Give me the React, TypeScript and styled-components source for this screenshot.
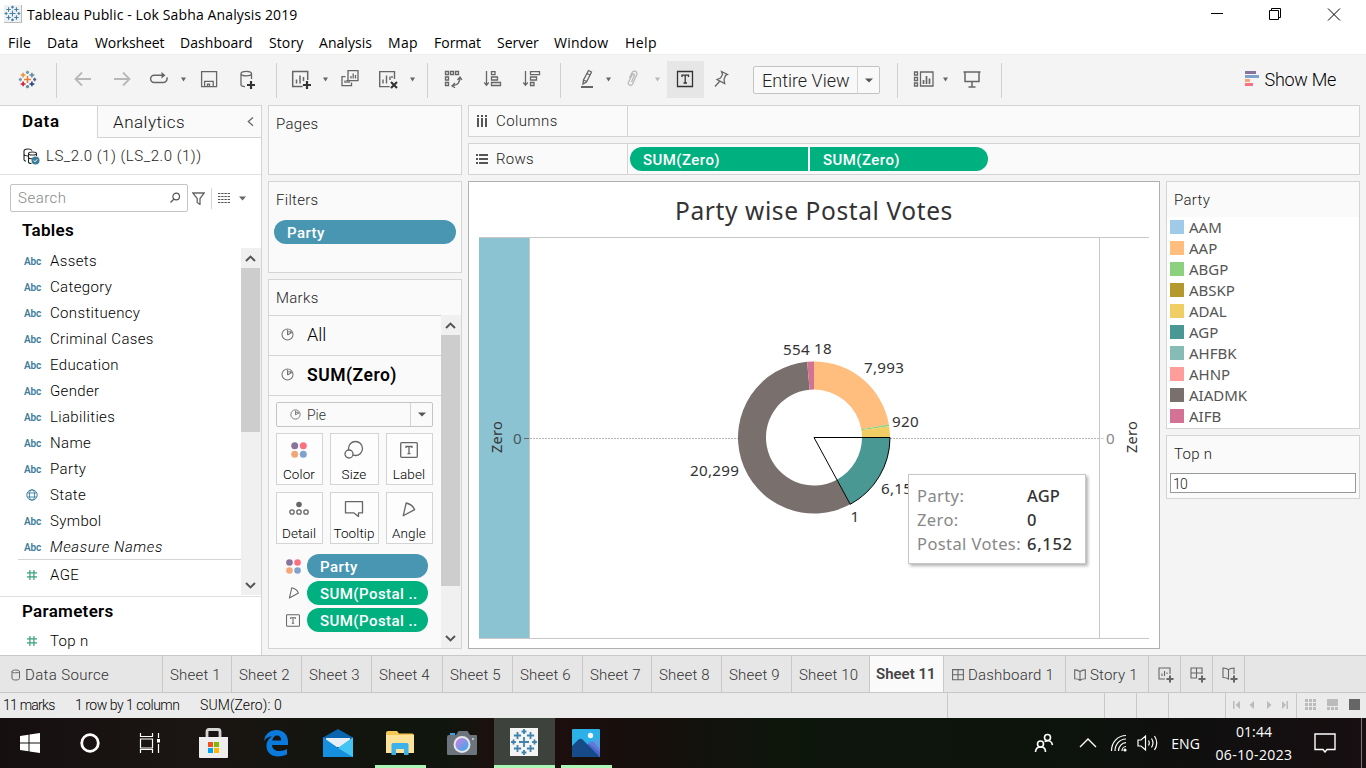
import React from 'react';
import styled, { createGlobalStyle, css } from 'styled-components';

const Global = createGlobalStyle`
  * { box-sizing: border-box; }
  html, body { margin: 0; padding: 0; }
  body { width: 1366px; height: 768px; overflow: hidden; background: #f4f4f4; }
  svg { display: block; flex: none; }
`;

const uiFont = `Roboto, "Liberation Sans", sans-serif`;
const vizFont = `"Noto Sans", "Open Sans", sans-serif`;
const sysFont = `"Open Sans", "Noto Sans", sans-serif`;
const line = '#d4d4d4';
const blue = '#4996b2';
const green = '#00b180';

/* ---------- primitives ---------- */

const Text = styled.span<{ $size?: number; $ls?: number; $w?: number; $c?: string; $ml?: number }>`
  display: block;
  white-space: pre;
  font-size: ${p => p.$size ?? 15}px;
  letter-spacing: ${p => p.$ls ?? 0}px;
  font-weight: ${p => p.$w ?? 'inherit'};
  color: ${p => p.$c ?? 'inherit'};
  margin-left: ${p => p.$ml ?? 0}px;
`;

const Screen = styled.div`
  width: 1366px;
  height: 768px;
  display: flex;
  flex-direction: column;
  font-family: ${uiFont};
  font-weight: 300;
  color: #000;
`;

/* ---------- title and menu ---------- */

const TitleBar = styled.header`
  height: 30px;
  background: #fff;
  display: flex;
  align-items: center;
  padding: 0 25px 1px 4px;
  font-family: ${sysFont};
  font-weight: 400;
  color: #000;
`;
const AppIcon = styled.div`
  width: 18px;
  height: 18px;
  background: #f0f0f0;
  border-right: 1px solid #bbb;
  border-bottom: 1px solid #bbb;
  margin-top: -1px;
`;
const WindowButtons = styled.div`
  margin: -1px 0 0 auto;
  display: flex;
  align-items: center;
  gap: 45px;
`;
const MenuBar = styled.nav`
  height: 24px;
  background: #fff;
  display: flex;
  align-items: center;
  padding: 1px 0 0 8px;
  font-family: ${sysFont};
  font-weight: 400;
  color: #000;
`;
const MenuItem = styled.span<{ $width: number; $ls: number }>`
  width: ${p => p.$width}px;
  font-size: 14px;
  letter-spacing: ${p => p.$ls}px;
  white-space: nowrap;
  line-height: 23px;
`;

/* ---------- toolbar ---------- */

const Toolbar = styled.div`
  height: 51px;
  padding-bottom: 2px;
  background: #f4f4f4;
  border-top: 1px solid #eee;
  display: flex;
  align-items: center;
`;
const Tool = styled.div<{ $ml: number; $dim?: boolean }>`
  margin-left: ${p => p.$ml}px;
  color: ${p => (p.$dim ? '#b8b8b8' : '#666')};
`;
const Separator = styled.div<{ $ml: number }>`
  width: 1px;
  height: 35px;
  background: #d0d0d0;
  margin-left: ${p => p.$ml}px;
  margin-top: 3px;
`;
const ActiveTool = styled.div`
  width: 37px;
  height: 37px;
  margin-left: 7px;
  padding-right: 2px;
  background: #e6e6e6;
  display: flex;
  align-items: center;
  justify-content: center;
  color: #333;
`;
const Select = styled.div`
  width: 127px;
  height: 28px;
  margin: 2px 0 0 22px;
  border: 1px solid #c4c4c4;
  border-radius: 2px;
  background: #f9f9f9;
  display: flex;
  align-items: center;
  color: #222;
`;
const SelectArrow = styled.div<{ $width: number }>`
  width: ${p => p.$width}px;
  height: 100%;
  margin-left: auto;
  border-left: 1px solid ${line};
  display: flex;
  align-items: center;
  justify-content: center;
  color: #555;
`;
const ShowMe = styled.div`
  margin: 0 30px 0 auto;
  display: flex;
  align-items: center;
  color: #000;
`;

/* ---------- workspace ---------- */

const Workspace = styled.main`
  height: 550px;
  display: flex;
`;
const DataPane = styled.aside`
  width: 262px;
  height: 550px;
  background: #fff;
  border-right: 1px solid ${line};
  border-top: 1px solid ${line};
  display: flex;
  flex-direction: column;
`;
const PaneTabs = styled.div`
  height: 32px;
  display: flex;
`;
const PaneTab = styled.div<{ $active?: boolean }>`
  display: flex;
  align-items: center;
  ${p =>
    p.$active
      ? css`width: 97px; padding: 0 0 2px 22px;`
      : css`
          flex: 1;
          padding: 0 7px 0 15px;
          background: #fafafa;
          border-left: 1px solid ${line};
          border-bottom: 1px solid ${line};
          justify-content: space-between;
        `}
`;
const SourceRow = styled.div`
  height: 37px;
  display: flex;
  align-items: center;
  padding-left: 23px;
  border-bottom: 1px solid #e0e0e0;
  color: #222;
`;
const SearchRow = styled.div`
  height: 28px;
  margin-top: 9px;
  padding-left: 10px;
  display: flex;
  align-items: center;
  color: #555;
`;
const SearchBox = styled.div`
  width: 178px;
  height: 28px;
  border: 1px solid #c4c4c4;
  border-radius: 2px;
  display: flex;
  align-items: center;
  justify-content: space-between;
  padding: 0 6px 0 7px;
  color: #888;
`;
const Rule = styled.div<{ $h: number; $ml: number }>`
  width: 1px;
  height: ${p => p.$h}px;
  margin-left: ${p => p.$ml}px;
  background: ${line};
`;
const SectionTitle = styled.h2<{ $h: number; $gap?: number }>`
  margin: 0 0 ${p => p.$gap ?? 0}px;
  height: ${p => p.$h}px;
  line-height: ${p => p.$h}px;
  padding-left: 22px;
  font-size: 17px;
  font-weight: 600;
  letter-spacing: 0.3px;
  color: #000;
`;
const FieldArea = styled.div`
  height: 349px;
  display: flex;
  border-bottom: 1px solid #e0e0e0;
`;
const FieldList = styled.div`
  flex: 1;
`;
const Field = styled.div<{ $italic?: boolean }>`
  height: 26px;
  display: flex;
  align-items: center;
  font-size: 15px;
  letter-spacing: ${p => (p.$italic ? 0.6 : 0.35)}px;
  font-style: ${p => (p.$italic ? 'italic' : 'normal')};
`;
const FieldType = styled.div<{ $indent?: number }>`
  width: ${p => 26 - (p.$indent ?? 0)}px;
  margin-left: ${p => 24 + (p.$indent ?? 0)}px;
  font-size: 10px;
  font-weight: 600;
  font-style: normal;
  letter-spacing: -0.1px;
  color: #3b7d9b;
`;
const FieldDivider = styled.div`
  height: 1px;
  margin: -1px 0 2px 18px;
  background: ${line};
`;
const ScrollTrack = styled.div<{ $h: number }>`
  width: 20px;
  height: ${p => p.$h}px;
  background: #f0f0f0;
  display: flex;
  flex-direction: column;
  color: #555;
`;
const ScrollButton = styled.div<{ $bottom?: boolean }>`
  width: 19px;
  height: 20px;
  margin-top: ${p => (p.$bottom ? 'auto' : 0)};
  display: flex;
  align-items: center;
  justify-content: center;
`;
const ScrollThumb = styled.div<{ $h: number }>`
  width: 19px;
  height: ${p => p.$h}px;
  background: #cdcdcd;
`;

/* ---------- shelves and cards ---------- */

const CardColumn = styled.section`
  width: 194px;
  margin-left: 6px;
  display: flex;
  flex-direction: column;
  gap: 6px;
`;
const Card = styled.div<{ $h: number }>`
  height: ${p => p.$h}px;
  border: 1px solid ${line};
  background: #fafafa;
`;
const CardTitle = styled.div`
  height: 35px;
  line-height: 37px;
  padding-left: 7px;
  font-size: 15px;
  letter-spacing: 0.3px;
  color: #222;
`;
const Pill = styled.div<{ $color: string; $width: number; $left?: boolean; $right?: boolean }>`
  width: ${p => p.$width}px;
  height: 24px;
  padding-left: 13px;
  line-height: 26px;
  border-radius: ${p => (p.$left ? '12px 0 0 12px' : p.$right ? '0 12px 12px 0' : '12px')};
  background: ${p => p.$color};
  color: #fff;
  font-size: 15px;
  font-weight: 500;
  letter-spacing: 0.45px;
  white-space: nowrap;
`;
const FilterPills = styled.div`
  padding: 3px 0 0 5px;
`;
const MarksBody = styled.div`
  height: 333px;
  display: flex;
`;
const MarksList = styled.div`
  width: 172px;
`;
const MarksRow = styled.div`
  height: 40px;
  border-top: 1px solid ${line};
  display: flex;
  align-items: center;
  padding: 0 0 2px 12px;
  color: #000;
`;
const MarksTools = styled.div`
  border-top: 1px solid ${line};
  padding: 6px 7px 0;
  height: 253px;
`;
const MarkType = styled.div`
  width: 157px;
  height: 25px;
  border: 1px solid #c4c4c4;
  border-radius: 2px;
  display: flex;
  align-items: center;
  padding-left: 13px;
  color: #666;
`;
const MarkGrid = styled.div`
  width: 157px;
  margin-top: 6px;
  display: grid;
  grid-template-columns: 47px 49px 47px;
  grid-auto-rows: 52px;
  gap: 7px;
`;
const MarkButton = styled.div`
  border: 1px solid ${line};
  background: #fdfdfd;
  display: flex;
  flex-direction: column;
  align-items: center;
  color: #666;
  padding: 6px 1px 0 0;
`;
const MarkLabel = styled.span`
  margin-top: 6px;
  font-size: 13.5px;
  line-height: 16px;
  letter-spacing: 0.1px;
  color: #000;
  white-space: nowrap;
`;
const MarkPills = styled.div`
  margin: 10px 0 0 10px;
  display: flex;
  flex-direction: column;
  gap: 3px;
`;
const PillRow = styled.div`
  display: flex;
  align-items: center;
  color: #666;
`;
const PillIcon = styled.div`
  width: 21px;
`;

const Main = styled.section`
  width: 892px;
  margin-left: 6px;
  display: flex;
  flex-direction: column;
  gap: 6px;
`;
const Shelf = styled.div`
  height: 32px;
  border: 1px solid ${line};
  background: #fafafa;
  display: flex;
  align-items: center;
`;
const ShelfLabel = styled.div`
  width: 159px;
  height: 100%;
  border-right: 1px solid ${line};
  padding: 0 0 0 7px;
  display: flex;
  align-items: center;
  line-height: 20px;
  color: #222;
`;
const ShelfPills = styled.div`
  display: flex;
  gap: 2px;
  padding-left: 2px;
`;
const ViewRow = styled.div`
  display: flex;
  gap: 6px;
`;
const Sheet = styled.div`
  position: relative;
  width: 692px;
  height: 468px;
  border: 1px solid #b0b0b0;
  background: #fff;
  font-family: ${vizFont};
  font-weight: 400;
`;
const SheetTitle = styled.h1`
  margin: 0;
  height: 55px;
  line-height: 58px;
  text-align: center;
  font-size: 24.5px;
  font-weight: 400;
  letter-spacing: 0.6px;
  color: #333;
`;
const Chart = styled.svg`
  font-family: ${vizFont};
`;
const Tooltip = styled.div`
  position: absolute;
  left: 439px;
  top: 292px;
  width: 178px;
  height: 90px;
  border: 1px solid #c8c8c8;
  background: #fff;
  box-shadow: 2px 2px 3px rgba(0, 0, 0, 0.3);
  padding: 9px 0 0 8px;
  display: grid;
  grid-template-columns: 110px 1fr;
  grid-auto-rows: 24px;
  align-content: start;
  line-height: 24px;
  white-space: nowrap;
`;
const Side = styled.aside`
  width: 194px;
  display: flex;
  flex-direction: column;
  gap: 6px;
`;
const Legend = styled.div`
  height: 211px;
  background: #fff;
  padding-left: 3px;
`;
const LegendItem = styled.div`
  height: 21px;
  display: flex;
  align-items: center;
  gap: 5px;
  color: #555;
  font-family: ${vizFont};
  font-weight: 400;
  line-height: 18px;
  padding-bottom: 1px;
`;
const Swatch = styled.span<{ $color: string }>`
  width: 14px;
  height: 14px;
  background: ${p => p.$color};
`;
const ParameterInput = styled.div`
  height: 20px;
  width: 186px;
  margin: 2px 0 0 3px;
  border: 1px solid #999;
  background: #fff;
  padding-left: 2px;
  line-height: 20px;
  font-size: 14px;
  letter-spacing: -0.7px;
  color: #222;
`;

/* ---------- bottom bars ---------- */

const TabStrip = styled.div`
  height: 38px;
  background: #e6e6e6;
  border-top: 1px solid #c8c8c8;
  border-bottom: 1px solid #c8c8c8;
  display: flex;
`;
const SheetTab = styled.div<{ $width: number; $pad?: number; $active?: boolean }>`
  width: ${p => p.$width}px;
  padding: 1px 0 0 ${p => p.$pad ?? 7}px;
  border-right: 1px solid #c8c8c8;
  display: flex;
  align-items: center;
  gap: 4px;
  font-size: 15px;
  letter-spacing: 0.2px;
  color: #333;
  white-space: nowrap;
  ${p =>
    p.$active &&
    css`
      padding: 0 0 1px 6px;
      background: #fafafa;
      color: #444;
      font-weight: 600;
      letter-spacing: 0;
    `}
`;
const StatusBar = styled.div`
  height: 25px;
  background: #ebebeb;
  display: flex;
  align-items: center;
  padding-left: 3px;
  color: #000;
`;
const StatusItem = styled.span<{ $width: number; $ls: number }>`
  width: ${p => p.$width}px;
  font-size: 14px;
  letter-spacing: ${p => p.$ls}px;
  line-height: 23px;
  white-space: nowrap;
`;
const StatusCell = styled.div<{ $width: number; $shift?: boolean }>`
  width: ${p => p.$width}px;
  height: 100%;
  border-left: 1px solid #c8c8c8;
  padding: 0 0 2px ${p => (p.$shift ? 3 : 0)}px;
  display: flex;
  align-items: center;
  justify-content: center;
`;

const Taskbar = styled.footer`
  height: 50px;
  background: linear-gradient(90deg, #150f10 0%, #1b1513 14%, #11150d 28%, #10160d 33%, #200e0e 37%, #160f0d 47%, #0d160b 58%, #0c140c 75%, #100f0f 88%, #170f11 100%);
  display: flex;
  color: #fff;
  font-family: ${sysFont};
  font-weight: 400;
`;
const TaskSlot = styled.div<{ $ml?: number; $width: number; $active?: boolean; $running?: boolean }>`
  width: ${p => p.$width}px;
  height: 50px;
  margin-left: ${p => p.$ml ?? 0}px;
  padding: 0 ${p => (p.$running ? 2 : 0)}px 0 0;
  display: flex;
  align-items: center;
  justify-content: center;
  background: ${p => (p.$active ? '#3e423c' : 'transparent')};
  border: solid transparent;
  border-width: 3px 0;
  border-bottom-color: ${p => (p.$running ? '#adf7b6' : 'transparent')};
`;
const Tray = styled.div`
  margin-left: auto;
  display: flex;
  align-items: center;
`;
const TrayIcon = styled.div<{ $ml?: number }>`
  margin-left: ${p => p.$ml ?? 0}px;
`;
const Clock = styled.div`
  width: 78px;
  margin-left: 15px;
  text-align: center;
  font-size: 14px;
  line-height: 23px;
  white-space: nowrap;
`;
const DesktopEdge = styled.div`
  width: 5px;
  height: 50px;
  margin-left: 25px;
  border-left: 1px solid #777;
`;

/* ---------- icons ---------- */

const Icon = ({ size = 20, w, h, children }: { size?: number; w?: number; h?: number; children: React.ReactNode }) => (
  <svg width={w ?? size} height={h ?? size} viewBox={`0 0 ${w ?? size} ${h ?? size}`} fill="none" stroke="currentColor" strokeWidth="1.3">
    {children}
  </svg>
);

const Caret = ({ w = 6 }: { w?: number }) => (
  <svg width={w} height="5" viewBox="0 0 6 5" preserveAspectRatio="none" fill="currentColor"><path d="M0 .5h6L3 4.5z" /></svg>
);

const plus = (x: number, y: number, r: number) => `M${x - r} ${y}h${r * 2}M${x} ${y - r}v${r * 2}`;

const TableauMark = ({ size, colored }: { size: number; colored?: boolean }) => {
  const c = colored
    ? ['#eb7a2e', '#e8933d', '#5c8aa8', '#c72035', '#1f457e', '#7199a6', '#5b6591', '#5b879b', '#7199a6']
    : Array(9).fill('#3f83ad');
  return (
    <svg width={size} height={size} viewBox="0 0 28 28" fill="none" strokeWidth={colored ? 2.3 : 1.8}>
      <path d={plus(14, 14, 5)} stroke={c[0]} />
      <path d={plus(7.5, 7.5, 3.6)} stroke={c[1]} />
      <path d={plus(20.5, 7.5, 3.6)} stroke={c[2]} />
      <path d={plus(7.5, 20.5, 3.6)} stroke={c[3]} />
      <path d={plus(20.5, 20.5, 3.6)} stroke={c[4]} />
      <path d={plus(14, 3.5, 2.4)} stroke={c[5]} />
      <path d={plus(24.5, 14, 2.4)} stroke={c[6]} />
      <path d={plus(14, 24.5, 2.4)} stroke={c[7]} />
      <path d={plus(3.5, 14, 2.4)} stroke={c[8]} />
    </svg>
  );
};

const PieIcon = ({ size = 13 }: { size?: number }) => (
  <svg width={size} height={size} viewBox="0 0 13 13" fill="none" stroke="#777" strokeWidth="1.1">
    <circle cx="6.5" cy="6.5" r="5.5" /><path d="M6.5 7V1.8M6.5 7L11 4.2M6.5 3.8h3v2" />
  </svg>
);
const ColorDots = ({ size }: { size: number }) => (
  <svg width={size} height={size} viewBox="0 0 16 16">
    <circle cx="3.7" cy="3.7" r="3.5" fill="#87739b" /><circle cx="12.3" cy="3.7" r="3.5" fill="#fb7081" />
    <circle cx="3.7" cy="12.3" r="3.5" fill="#f3a778" /><circle cx="12.3" cy="12.3" r="3.5" fill="#7ea2cc" />
  </svg>
);
const AngleIcon = ({ w = 14, h = 15 }: { w?: number; h?: number }) => (
  <svg width={w} height={h} viewBox="0 0 14 15" fill="none" stroke="currentColor" strokeWidth="1.3" strokeLinejoin="round">
    <path d="M4.2 1Q10.5 2.5 12.6 7.6L1.2 13.8z" />
  </svg>
);
const LabelIcon = ({ w, h }: { w: number; h: number }) => (
  <svg width={w} height={h} viewBox="0 0 18 16" fill="none" stroke="currentColor" strokeWidth="1.3">
    <rect x=".7" y=".7" width="16.6" height="14.6" rx="1" /><path d="M6 6V4.5h6V6M9 4.5v7M7.5 11.6h3" />
  </svg>
);
const Hash = () => (
  <svg width="12" height="12" viewBox="0 0 12 12" fill="none" stroke="#35a27a" strokeWidth="1.2">
    <path d="M3.9 1v10M7.9 1v10M1 3.9h10M1 7.9h10" />
  </svg>
);
const Globe = () => (
  <svg width="12" height="12" viewBox="0 0 12 12" fill="none" stroke="#4a86a4" strokeWidth="1">
    <circle cx="6" cy="6" r="5.2" /><ellipse cx="6" cy="6" rx="2.6" ry="5.2" /><path d="M1.4 4h9.2M1.4 8h9.2" />
  </svg>
);
const Chevron = ({ down }: { down?: boolean }) => (
  <svg width="11" height="7" viewBox="0 0 11 7" fill="none" stroke="#555" strokeWidth="2"><path d={down ? 'M1 1l4.5 4.4L10 1' : 'M1 6l4.5-4.4L10 6'} /></svg>
);
const DashboardIcon = () => (
  <svg width="12" height="12" viewBox="0 0 12 12" fill="none" stroke="#666" strokeWidth="1.1"><path d="M.6.6h10.8v10.2H.6zM6 .6v10.2M.6 5.7h10.8" /></svg>
);
const StoryIcon = () => (
  <svg width="12" height="12" viewBox="0 0 12 12" fill="none" stroke="#666" strokeWidth="1.1">
    <path d="M6 2.6C4.5 1.2 2.6.9.7.9v8.9c2 0 3.8.3 5.3 1.6 1.5-1.3 3.3-1.6 5.3-1.6V.9C9.4.9 7.5 1.2 6 2.6zv8.7" />
  </svg>
);

/* ---------- data ---------- */

const menus: [string, number, number][] = [
  ['File', 39, 0.2], ['Data', 48, 0.2], ['Worksheet', 85, -0.1], ['Dashboard', 89, 0.05], ['Story', 50, 0.1], ['Analysis', 69, 0.05],
  ['Map', 46, 0.3], ['Format', 63, 0], ['Server', 57, 0], ['Window', 71, 0.25], ['Help', 50, 0.4],
];
const fields = ['Assets', 'Category', 'Constituency', 'Criminal Cases', 'Education', 'Gender', 'Liabilities', 'Name', 'Party', 'State', 'Symbol', 'Measure Names'];
const legend: [string, string][] = [
  ['AAM', '#a0cbe8'], ['AAP', '#ffbe7d'], ['ABGP', '#8cd17d'], ['ABSKP', '#b6992d'], ['ADAL', '#f1ce63'],
  ['AGP', '#499894'], ['AHFBK', '#86bcb6'], ['AHNP', '#ff9d9a'], ['AIADMK', '#79706e'], ['AIFB', '#d37295'],
];
const tabs: [string, number][] = [
  ['Sheet 1', 69], ['Sheet 2', 70], ['Sheet 3', 70], ['Sheet 4', 71], ['Sheet 5', 70], ['Sheet 6', 70], ['Sheet 7', 69],
  ['Sheet 8', 70], ['Sheet 9', 70], ['Sheet 10', 78],
];
const slices: [number, number, string][] = [
  [0, 80.2, '#ffbe7d'], [80.2, 81.4, '#8cd17d'], [81.4, 90, '#f1ce63'], [90, 151.5, '#499894'], [151.5, 354.8, '#79706e'], [354.8, 360, '#d37295'],
];
const labels: [string, number, number][] = [
  ['554', 783, 355], ['18', 814, 354], ['7,993', 864, 372.5], ['920', 892, 426.5], ['6,152', 881, 493.5], ['1', 850.5, 521.5], ['20,299', 690, 475.5],
];

/* Screen position of the drawing's origin, and the donut's centre in drawing units. */
const OX = 469;
const OY = 237;
const CX = 814 - OX;
const CY = 437.5 - OY;
const at = (deg: number, r: number) => {
  const a = ((deg - 90) * Math.PI) / 180;
  return `${(CX + r * Math.cos(a)).toFixed(2)} ${(CY + r * Math.sin(a)).toFixed(2)}`;
};
const ring = (a: number, b: number) => {
  const big = b - a > 180 ? 1 : 0;
  return `M${at(a, 76)}A76 76 0 ${big} 1 ${at(b, 76)}L${at(b, 48)}A48 48 0 ${big} 0 ${at(a, 48)}Z`;
};

const DonutChart = () => (
  <Chart width="690" height="411" viewBox="0 0 690 411">
    <rect x="10" y="1" width="50" height="400" fill="#8cc3d2" />
    <path d="M10 .5h670M60.5 1v400M630.5 1v400M10 401.5h670" stroke="#c8c8c8" fill="none" />
    <path d="M61 201.5h569" stroke="#b8b8b8" strokeDasharray="2 1" fill="none" />
    <path d="M55 201.5h5" stroke="#666" />
    <path d="M631 201.5h4" stroke="#ddd" />
    <circle cx={CX} cy={CY} r="60" fill="#fff" />
    {slices.map(([a, b, c]) => <path key={a} d={ring(a, b)} fill={c} />)}
    <path d={`M${at(90, 76)}L${CX} ${CY}L${at(151.5, 76)}A76 76 0 0 0 ${at(90, 76)}`} stroke="#000" strokeWidth="1" fill="none" />
    <g fill="#333" fontSize="15.2" letterSpacing=".3">
      {labels.map(([t, x, y]) => <text key={t} x={x - OX} y={y - OY}>{t}</text>)}
      <text x="44" y="207" fill="#455a64">0</text>
      <text x="637" y="207" fill="#888">0</text>
      <text transform="translate(33 216) rotate(-90)" fontSize="14.5">Zero</text>
      <text transform="translate(668 216) rotate(-90)" fontSize="14.5">Zero</text>
    </g>
  </Chart>
);

export default function App() {
  return (
    <Screen>
      <Global />
      <TitleBar>
        <AppIcon><TableauMark size={17} /></AppIcon>
        <Text $size={14} $ls={0.12} $ml={5}>Tableau Public - Lok Sabha Analysis 2019</Text>
        <WindowButtons>
          <svg width="14" height="14" stroke="#000" fill="none"><path d="M2 6.5h12" /></svg>
          <svg width="14" height="14" stroke="#000" fill="none"><path d="M1.5 3.5h9v9h-9zM3.5 3.5v-2h9v9h-2" /></svg>
          <svg width="14" height="14" stroke="#000" fill="none"><path d="M1 1.5l12 12M13 1.5l-12 12" /></svg>
        </WindowButtons>
      </TitleBar>
      <MenuBar>
        {menus.map(([m, w, ls]) => <MenuItem key={m} $width={w} $ls={ls}>{m}</MenuItem>)}
      </MenuBar>

      <Toolbar>
        <Tool $ml={18}><TableauMark size={19} colored /></Tool>
        <Separator $ml={19} />
        <Tool $ml={16} $dim><Icon><path d="M18 10H3M9 3.5L2.5 10 9 16.5" strokeWidth="1.8" /></Icon></Tool>
        <Tool $ml={19} $dim><Icon><path d="M2 10h15M11 3.5l6.5 6.5-6.5 6.5" strokeWidth="1.8" /></Icon></Tool>
        <Tool $ml={17}><Icon><path d="M13.5 6.2H5.2a3.6 3.6 0 0 0 0 7.2h9.6a3.6 3.6 0 0 0 3-5" strokeWidth="1.5" /><path d="M12.500 3l4 3.200-4 3.200z" fill="currentColor" stroke="none" /></Icon></Tool>
        <Tool $ml={12}><Caret w={5} /></Tool>
        <Tool $ml={13}><Icon><path d="M2.6 2.6h15v15h-15zM5.6 17.6v-5.2h8.6v5.2M8.5 17.6v-2.500h2v2.500" /></Icon></Tool>
        <Tool $ml={19}><Icon><path d="M13.5 10V4.5M3 4.5v11.300c0 1.100 1.800 1.800 4 1.800M3 4.600c0-3 10.500-3 10.500 0s-10.500 3-10.500 0z" /><path d="M13 12v8M9 16h8" stroke="#333" strokeWidth="2.2" /></Icon></Tool>
        <Separator $ml={18} />
        <Tool $ml={14}><Icon><path d="M16.7 11V2.6H1.7v15h10M5.5 14.5v-4M9 14.5v-8M12.5 12V8" strokeWidth="1.5" /><path d="M16 12v8M12 16h8" stroke="#333" strokeWidth="2.2" /></Icon></Tool>
        <Tool $ml={12}><Caret w={5} /></Tool>
        <Tool $ml={12}><Icon><path d="M8 1.6h10v10H8zM5.5 7.6H2v9h9.5v-3M11 9.5V7M13.2 9.5V4.5M15.5 9.5V6M5 14v-2.500M7 14v-3M9 14v-2" /></Icon></Tool>
        <Tool $ml={18}><Icon><path d="M16.5 10V2.6H1.7v15h10M5 14.5v-4M8.5 14.5v-8M12 11V7.5M14 9V7" strokeWidth="1.4" /><path d="M13 13l6 6M19 13l-6 6" stroke="#333" strokeWidth="2.1" /></Icon></Tool>
        <Tool $ml={12}><Caret w={5} /></Tool>
        <Separator $ml={12} />
        <Tool $ml={15}><Icon><path d="M2.5 2.5h3v3h-3zM7.5 2.5h3v3h-3zM12.5 2.5h3v3h-3zM2.5 8h3v3h-3zM2.5 13.5h3v3h-3zM17 8.5c0 5-2.500 7.500-7 8.200M14.500 11l2.500-3 2 3M12 14l-3 2.800 3 2" /></Icon></Tool>
        <Tool $ml={20}><Icon><path d="M3.5 2v14M1.3 13.5l2.2 2.8 2.2-2.8M8.5 2.7h3.5v3H8.5zM8.5 8h6v3h-6zM8.5 13.5h9v3h-9z" /></Icon></Tool>
        <Tool $ml={19}><Icon><path d="M3.5 2v14M1.3 13.5l2.2 2.8 2.2-2.8M8.5 2.7h9v3h-9zM8.5 8h6v3h-6zM8.5 13.5h3.5v3H8.5z" /></Icon></Tool>
        <Separator $ml={18} />
        <Tool $ml={16}><Icon><path d="M11.5 1.5l3 1.5-5 10-3.5 2 .5-4zM10 4.5l3 1.5M6.5 11l3 1.5" /><path d="M4 18h12" strokeWidth="2" /></Icon></Tool>
        <Tool $ml={9}><Caret w={5} /></Tool>
        <Tool $ml={12} $dim><Icon><path d="M6.5 9L9 3.8c1.5-3 6-1.2 4.8 1.8L9.5 15c-1.2 2.5-5.2 1-4-1.8L9 6q1.5-2 2.5 0L8.500 13" /></Icon></Tool>
        <Tool $ml={12} $dim><Caret w={5} /></Tool>
        <ActiveTool><Icon><path d="M2.5 2.5h15v15h-15zM7 8V6.2h6.5V8M10.2 6.2v8M8.5 14h3.5" strokeWidth="1.3" /></Icon></ActiveTool>
        <Tool $ml={7}><Icon><path d="M10.5 2.5l6 3-2 1-1.5 4 .7 4-7.7-4 3.5-1.5 2-3.5zM8.5 12.5l-4.5 5" /></Icon></Tool>
        <Select>
          <Text $size={18} $ml={8}>Entire View</Text>
          <SelectArrow $width={22}><Caret w={8} /></SelectArrow>
        </Select>
        <Separator $ml={17} />
        <Tool $ml={15}><Icon w={21} h={20}><path d="M1.5 3h3v3h-3zM1.5 8.5h3v3h-3zM1.5 14h3v3h-3zM7.5 3h12.5v14H7.5z" /><path d="M10.5 15v-4M13.5 15V7M16.5 15V9.5" strokeWidth="1.7" /></Icon></Tool>
        <Tool $ml={9}><Caret w={5} /></Tool>
        <Tool $ml={14}><Icon><path d="M1.5 3h17M3 3v9.5h14V3M10 12.5V18M6.5 18h7" strokeWidth="1.5" /></Icon></Tool>
        <Separator $ml={19} />
        <ShowMe>
          <svg width="14" height="16"><path fill="#87739b" d="M0 0h11v3H0z" /><path fill="#7ea2cc" d="M0 4h14v3H0z" /><path fill="#f3a778" d="M0 8h5v3H0z" /><path fill="#fb7081" d="M0 12h8v3H0z" /></svg>
          <Text $size={18} $ml={6} $ls={-0.3}>Show Me</Text>
        </ShowMe>
      </Toolbar>

      <Workspace>
        <DataPane>
          <PaneTabs>
            <PaneTab $active><Text $size={17} $w={600} $ls={0.7}>Data</Text></PaneTab>
            <PaneTab>
              <Text $size={17} $ls={0.5} $c="#111">Analytics</Text>
              <svg width="7" height="10" viewBox="0 0 7 10" fill="none" stroke="#666" strokeWidth="1.3"><path d="M6 .5L1.3 4.5 6 8.7" /></svg>
            </PaneTab>
          </PaneTabs>
          <SourceRow>
            <Icon w={17} h={17}><path d="M9 2.5C8 .5 1 .5 1 3v8.5c0 1 1 1.5 2 1.7M13.5 8V5.5c0-2-8-2-8 0V14c0 1 1 1.5 3 1.5M5.5 5.5c0 2 8 2 8 0M1 6.500c.5 1 2 1.500 4 1.500M5.500 9.500c1 1.500 3 1.300 4 1" strokeWidth="1.1" /><circle cx="12.5" cy="12.5" r="4" fill="#3b7d9b" stroke="none" /><path d="M10.8 12.5l1.2 1.3 2.2-2.5" stroke="#fff" strokeWidth="1" /></Icon>
            <Text $ml={6} $ls={0.52}>LS_2.0 (1) (LS_2.0 (1))</Text>
          </SourceRow>
          <SearchRow>
            <SearchBox>
              <Text $ls={0.5}>Search</Text>
              <svg width="12" height="12" viewBox="0 0 12 12" fill="none" stroke="#555" strokeWidth="1.2"><circle cx="7.2" cy="4.5" r="3.3" /><path d="M5 7L1.5 10.5" /></svg>
            </SearchBox>
            <Tool $ml={4}><Icon size={13}><path d="M.8 1h11.4L8 6.5v6L5.2 10.5v-4z" /></Icon></Tool>
            <Rule $h={21} $ml={6} />
            <Tool $ml={6}><svg width="12" height="10" stroke="#555" fill="none" strokeDasharray="2.4 .8"><path d="M0 .5h12M0 3.5h12M0 6.5h12M0 9.5h12" /></svg></Tool>
            <Tool $ml={9}><Caret w={7} /></Tool>
          </SearchRow>
          <SectionTitle $h={36}>Tables</SectionTitle>
          <FieldArea>
            <FieldList>
              {fields.map(f => (
                <Field key={f} $italic={f === 'Measure Names'}>
                  <FieldType $indent={f === 'State' ? 2 : 0}>{f === 'State' ? <Globe /> : 'Abc'}</FieldType>
                  {f}
                </Field>
              ))}
              <FieldDivider />
              <Field><FieldType $indent={2}><Hash /></FieldType>AGE</Field>
            </FieldList>
            <ScrollTrack $h={347}>
              <ScrollButton><Chevron /></ScrollButton>
              <ScrollThumb $h={164} />
              <ScrollButton $bottom><Chevron down /></ScrollButton>
            </ScrollTrack>
          </FieldArea>
          <SectionTitle $h={28} $gap={3}>Parameters</SectionTitle>
          <Field><FieldType $indent={2}><Hash /></FieldType>Top n</Field>
        </DataPane>

        <CardColumn>
          <Card $h={70}><CardTitle>Pages</CardTitle></Card>
          <Card $h={92}>
            <CardTitle>Filters</CardTitle>
            <FilterPills><Pill $color={blue} $width={182}>Party</Pill></FilterPills>
          </Card>
          <Card $h={370}>
            <CardTitle>Marks</CardTitle>
            <MarksBody>
              <MarksList>
                <MarksRow><PieIcon /><Text $size={18} $ml={13}>All</Text></MarksRow>
                <MarksRow><PieIcon /><Text $size={17.5} $ml={13} $w={600} $ls={0.5}>SUM(Zero)</Text></MarksRow>
                <MarksTools>
                  <MarkType><PieIcon size={11} /><Text $size={14} $ml={6} $c="#333">Pie</Text><SelectArrow $width={22}><Caret w={8} /></SelectArrow></MarkType>
                  <MarkGrid>
                    <MarkButton><Icon><g transform="translate(2 2)" stroke="none"><ColorDots size={16} /></g></Icon><MarkLabel>Color</MarkLabel></MarkButton>
                    <MarkButton><Icon><circle cx="11.5" cy="8.5" r="7" /><circle cx="5" cy="14" r="4" fill="#fdfdfd" /></Icon><MarkLabel>Size</MarkLabel></MarkButton>
                    <MarkButton><Icon><g transform="translate(1 2)"><LabelIcon w={18} h={16} /></g></Icon><MarkLabel>Label</MarkLabel></MarkButton>
                    <MarkButton><Icon><circle cx="10" cy="5.5" r="2.8" fill="currentColor" stroke="none" /><circle cx="3" cy="13" r="2.2" /><circle cx="10" cy="13" r="2.2" /><circle cx="17" cy="13" r="2.2" /></Icon><MarkLabel>Detail</MarkLabel></MarkButton>
                    <MarkButton><Icon><path d="M1.5 2.7h17v11.2h-4v3.6l-4.500-3.600H1.500z" strokeLinejoin="round" /></Icon><MarkLabel>Tooltip</MarkLabel></MarkButton>
                    <MarkButton><Icon><g transform="translate(3 3)"><AngleIcon /></g></Icon><MarkLabel>Angle</MarkLabel></MarkButton>
                  </MarkGrid>
                  <MarkPills>
                    <PillRow><PillIcon><ColorDots size={15} /></PillIcon><Pill $color={blue} $width={121}>Party</Pill></PillRow>
                    <PillRow><PillIcon><Icon w={14} h={14}><g transform="translate(2 1)"><AngleIcon w={12} h={12} /></g></Icon></PillIcon><Pill $color={green} $width={121}>SUM(Postal ..</Pill></PillRow>
                    <PillRow><PillIcon><LabelIcon w={14} h={13} /></PillIcon><Pill $color={green} $width={121}>SUM(Postal ..</Pill></PillRow>
                  </MarkPills>
                </MarksTools>
              </MarksList>
              <ScrollTrack $h={333}>
                <ScrollButton><Chevron /></ScrollButton>
                <ScrollThumb $h={251} />
                <ScrollButton $bottom><Chevron down /></ScrollButton>
              </ScrollTrack>
            </MarksBody>
          </Card>
        </CardColumn>

        <Main>
          <Shelf>
            <ShelfLabel>
              <svg width="12" height="12" fill="#555"><path d="M1 0h2v2H1zM5 0h2v2H5zM9 0h2v2H9zM1 3h2v9H1zM5 3h2v9H5zM9 3h2v9H9z" /></svg>
              <Text $ml={8} $ls={0.4}>Columns</Text>
            </ShelfLabel>
          </Shelf>
          <Shelf>
            <ShelfLabel>
              <svg width="12" height="12" fill="#555"><path d="M0 1h2v2H0zM0 5h2v2H0zM0 9h2v2H0zM3 1h9v2H3zM3 5h9v2H3zM3 9h9v2H3z" /></svg>
              <Text $ml={8} $ls={0.25}>Rows</Text>
            </ShelfLabel>
            <ShelfPills>
              <Pill $color={green} $width={178} $left>SUM(Zero)</Pill>
              <Pill $color={green} $width={178} $right>SUM(Zero)</Pill>
            </ShelfPills>
          </Shelf>
          <ViewRow>
            <Sheet>
              <SheetTitle>Party wise Postal Votes</SheetTitle>
              <DonutChart />
              <Tooltip>
                <Text $size={16.5} $ls={0.4} $c="#888">Party:</Text><Text $size={16.5} $ls={0.2} $w={500} $c="#333">AGP</Text>
                <Text $size={16.5} $ls={0.4} $c="#888">Zero:</Text><Text $size={16.5} $w={500} $c="#333">0</Text>
                <Text $size={16.5} $ls={0.4} $c="#888">Postal Votes:</Text><Text $size={16.5} $ls={0.7} $w={500} $c="#333">6,152</Text>
              </Tooltip>
            </Sheet>
            <Side>
              <Card $h={248}>
                <CardTitle>Party</CardTitle>
                <Legend>
                  {legend.map(([name, color]) => (
                    <LegendItem key={name}><Swatch $color={color} /><Text>{name}</Text></LegendItem>
                  ))}
                </Legend>
              </Card>
              <Card $h={64}>
                <CardTitle>Top n</CardTitle>
                <ParameterInput>10</ParameterInput>
              </Card>
            </Side>
          </ViewRow>
        </Main>
      </Workspace>

      <TabStrip>
        <SheetTab $width={163} $pad={11}>
          <svg width="10" height="12" viewBox="0 0 10 12" fill="none" stroke="#666"><path d="M1 2.5v7c0 2 7.5 2 7.5 0v-7C8.5.5 1 .5 1 2.5s7.5 1.5 7.5 0" /></svg>
          <Text $ls={0.35}>Data Source</Text>
        </SheetTab>
        {tabs.map(([t, w]) => <SheetTab key={t} $width={w}>{t}</SheetTab>)}
        <SheetTab $width={74} $active>Sheet 11</SheetTab>
        <SheetTab $width={122} $pad={8}><DashboardIcon />Dashboard 1</SheetTab>
        <SheetTab $width={83} $pad={8}><StoryIcon />Story 1</SheetTab>
        <SheetTab $width={32} $pad={9}>
          <svg width="16" height="16" viewBox="0 0 16 16" fill="none" stroke="#666" strokeWidth="1.1"><path d="M12 7V1H1v11h6M4 9V6.5M6.5 9V4M9 7V5.5" /><path d="M12 8.5v7M8.5 12h7" strokeWidth="2" /></svg>
        </SheetTab>
        <SheetTab $width={32} $pad={9}>
          <svg width="16" height="16" viewBox="0 0 16 16" fill="none" stroke="#666" strokeWidth="1.1"><path d="M12 7V1H1v10h6M1 6h11M6.5 1v10" /><path d="M12 8.5v7M8.5 12h7" strokeWidth="2" /></svg>
        </SheetTab>
        <SheetTab $width={32} $pad={9}>
          <svg width="16" height="16" viewBox="0 0 16 16" fill="none" stroke="#666" strokeWidth="1.1"><path d="M12 7V1C10 1 8 1.3 6.5 2.7 5 1.3 3 1 1 1v9.5c2 0 4 .3 5.5 1.5V2.7" /><path d="M12 8.5v7M8.5 12h7" strokeWidth="2" /></svg>
        </SheetTab>
      </TabStrip>
      <StatusBar>
        <StatusItem $width={72} $ls={-0.75}>11 marks</StatusItem>
        <StatusItem $width={125} $ls={-0.47}>1 row by 1 column</StatusItem>
        <StatusItem $width={747} $ls={0.1}>SUM(Zero): 0</StatusItem>
        <StatusCell $width={157} /><StatusCell $width={32} /><StatusCell $width={32} /><StatusCell $width={57} />
        <StatusCell $width={71}>
          <svg width="56" height="8" fill="#bbb"><path d="M0 0h1.5v8H0zM7 0v8L2.5 4zM21 0v8l-4.5-4zM34 0v8l4.5-4zM49 0v8l4-4zM53.5 0H55v8h-1.5z" /></svg>
        </StatusCell>
        <StatusCell $width={70} $shift>
          <svg width="56" height="11" fill="#bbb"><path d="M0 0h3v3H0zM4 0h3v3H4zM8 0h3v3H8zM0 4h3v3H0zM4 4h3v3H4zM8 4h3v3H8zM0 8h3v3H0zM4 8h3v3H4zM8 8h3v3H8zM22 0h11v7H22zM22 8h3v3h-3zM26 8h3v3h-3zM30 8h3v3h-3z" /><rect x="44" width="11" height="11" fill="#666" /></svg>
        </StatusCell>
      </StatusBar>

      <Taskbar>
        <TaskSlot $width={60}>
          <svg width="20" height="20" fill="#fff"><path d="M0 3l8.5-1.3v7.8H0zM9.5 1.5L20 0v9.5H9.5zM0 10.5h8.5v7.8L0 17zM9.5 10.5H20V20L9.5 18.5z" /></svg>
        </TaskSlot>
        <TaskSlot $width={60}><svg width="20" height="20" fill="none" stroke="#fff" strokeWidth="2.8"><circle cx="10" cy="10" r="8.3" /></svg></TaskSlot>
        <TaskSlot $width={60}>
          <svg width="22" height="20" fill="none" stroke="#fff" strokeWidth="1.2"><path d="M1.5 0v3.5h12V0M1.5 6h12v9h-12zM1.5 20v-3.5h12V20M19.5 0v5M19.5 11v9" /><path d="M18 6h3v3.5h-3z" fill="#fff" stroke="none" /></svg>
        </TaskSlot>
        <TaskSlot $width={67}>
          <svg width="30" height="30"><path d="M8 10V3.5q0-2 2-2h9q2 0 2 2V10" fill="none" stroke="#d5d5d5" strokeWidth="2.8" /><path d="M0 9h29v20q0 1-1 1H1q-1 0-1-1z" fill="#eee" /><path d="M9 14h5v5H9z" fill="#f25022" /><path d="M15 14h5v5h-5z" fill="#7fba00" /><path d="M9 20h5v5H9z" fill="#00a4ef" /><path d="M15 20h5v5h-5z" fill="#ffb900" /></svg>
        </TaskSlot>
        <TaskSlot $width={58}>
          <svg width="26" height="28" viewBox="0 0 26 28"><path d="M1 12C2 4.5 7.5 1 13.5 1 20.5 1 25 6 25 12.5V16H9c.3 4 3.5 6 7.5 6 3 0 5.500-.8 7.500-2v5.300C21.500 26.600 18.500 27.500 15 27.500 8 27.500 3.500 23 3.500 17c0-4.500 2.500-7.700 5.500-9.500C5.500 7.700 3 9 1 12zM9.300 11.500h8.900c0-3-1.400-5-4.200-5-2.600 0-4.200 2-4.700 5z" fill="#0a7bdc" /></svg>
        </TaskSlot>
        <TaskSlot $width={66}>
          <svg width="30" height="28"><path d="M0 8.5L15 0l15 8.5V13H0z" fill="#0a64ae" /><path d="M3 9h24v9H3z" fill="#e8eef5" /><path d="M0 8.5L15 19 30 8.5V28H0z" fill="#35a9e6" /><path d="M0 8.5L15 19 30 28H0z" fill="#1490df" /><path d="M15 19L30 8.5V28z" fill="#42c4f4" /></svg>
        </TaskSlot>
        <TaskSlot $ml={4} $width={51} $running>
          <svg width="28" height="24"><path d="M0 2q0-2 2-2h9l2 2.5h13q2 0 2 2V22H0z" fill="#f6c755" /><path d="M0 4h28v18H0z" fill="#fde399" /><path d="M5.5 24V13.5q0-1.5 1.5-1.5h14q1.5 0 1.5 1.5V24h-4.5v-6h-8v6z" fill="#3cb1ea" /></svg>
        </TaskSlot>
        <TaskSlot $ml={5} $width={61}>
          <svg width="30" height="25"><path d="M3 2h5v4H3z" fill="#35a4e6" /><path d="M9 4l2.5-4h9L23 4h6q1 0 1 1v18q0 1-1 1H1q-1 0-1-1V6q0-2 2-2z" fill="#6c757e" /><defs><linearGradient id="lens" x2="1" y2="1"><stop stopColor="#e278dc" /><stop offset="1" stopColor="#20b2f0" /></linearGradient></defs><circle cx="15" cy="13.5" r="7.5" fill="url(#lens)" stroke="#e6e6e6" strokeWidth="2" /><circle cx="26" cy="8" r="1" fill="#ddd" /></svg>
        </TaskSlot>
        <TaskSlot $ml={2} $width={61} $active $running>
          <svg width="28" height="30"><rect width="28" height="28" fill="#f4f4f4" /><TableauMark size={28} /></svg>
        </TaskSlot>
        <TaskSlot $ml={6} $width={51} $running>
          <svg width="28" height="28"><rect width="28" height="28" rx="1" fill="#2bb0e8" /><path d="M14 28L7 25l11-12q2-1 4 0l6 7v7q0 1-1 1z" fill="#4a68d0" /><path d="M16 14l3-1 9-4v14z" fill="#7a8ee0" opacity=".5" /><path d="M0 17l6.5-6.5q2-1.5 4 0L27 27q0 1-1 1H1q-1 0-1-1z" fill="#174a88" /><circle cx="18.5" cy="6.5" r="2.7" fill="#f0f6fa" /></svg>
        </TaskSlot>
        <Tray>
          <TrayIcon><svg width="20" height="20" viewBox="0 0 20 20" fill="none" stroke="#fff" strokeWidth="1.6"><circle cx="13.5" cy="4.5" r="3" /><path d="M10.5 8.5q7-2.5 8 3.5" /><circle cx="6.5" cy="11" r="3" /><path d="M1.5 19q0-4.700 5-5t5 5" /></svg></TrayIcon>
          <TrayIcon $ml={25}><svg width="18" height="10" fill="none" stroke="#fff" strokeWidth="1.4"><path d="M1 9l8-8 8 8" /></svg></TrayIcon>
          <TrayIcon $ml={13}><svg width="18" height="18" fill="none" stroke="#fff" strokeWidth="1.2"><path d="M1.5 17C1.5 8 8 1.5 16 1.5M5 17C5 10 10 5 16 5M8.5 17c0-4.5 3.500-8.300 7.500-8.300M12 17c0-2.500 1.800-4.500 4-4.500" /><circle cx="15" cy="16" r="1.6" fill="#fff" stroke="none" /></svg></TrayIcon>
          <TrayIcon $ml={9}><svg width="22" height="18" fill="none" stroke="#fff" strokeWidth="1.2"><path d="M1 6h3l4.5-4v14L4 12H1zM11.5 6.5q1.5 2.5 0 5M14.5 4.5q3 4.5 0 9M17.5 2q4.5 7 0 14" /></svg></TrayIcon>
          <Text $size={14} $ml={12} $ls={0.1}>ENG</Text>
          <Clock><Text $size={14} $ls={0.1}>01:44</Text><Text $size={14} $ls={0.4}>06-10-2023</Text></Clock>
          <TrayIcon $ml={21}><svg width="22" height="20" fill="none" stroke="#fff" strokeWidth="1.4"><path d="M1 1h20v15.5h-8l-2 2.5-2-2.5H1z" /></svg></TrayIcon>
          <DesktopEdge />
        </Tray>
      </Taskbar>
    </Screen>
  );
}
